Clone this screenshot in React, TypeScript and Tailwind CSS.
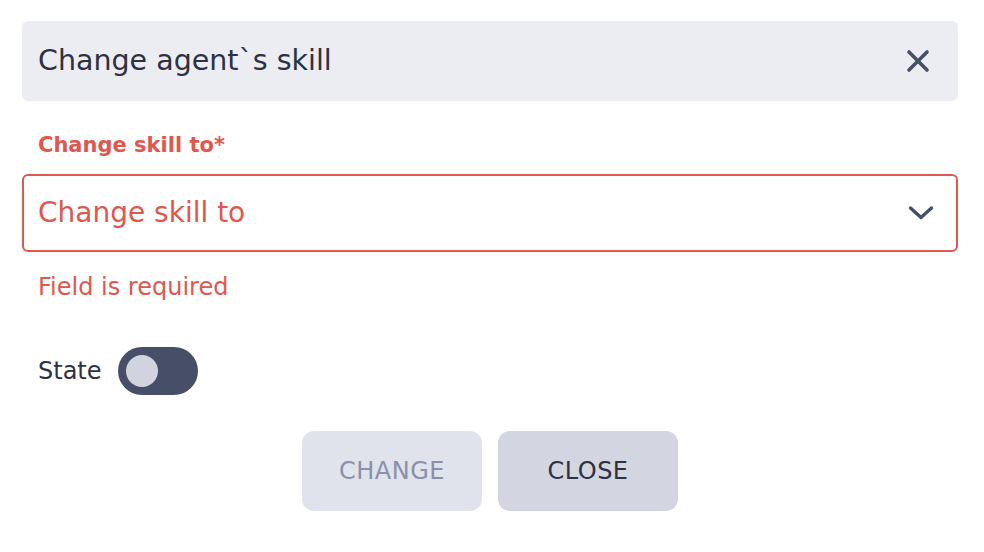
import { useState } from "react";

const FONT = "font-['DejaVu_Sans',sans-serif]";

function CloseIcon() {
  return (
    <svg width="24" height="24" viewBox="0 0 24 24" fill="none">
      <path d="M3 3L21 21M21 3L3 21" stroke="#474F68" strokeWidth="3.6" strokeLinecap="round" />
    </svg>
  );
}

function Chevron() {
  return (
    <svg width="26" height="16" viewBox="0 0 26 16" fill="none">
      <path d="M2.5 3L13 12.5L23.5 3" stroke="#474F68" strokeWidth="3.4" strokeLinecap="round" strokeLinejoin="round" />
    </svg>
  );
}

export default function App() {
  const [on, setOn] = useState(false);

  return (
    <div className={`${FONT} w-[984px] h-[552px] bg-white pl-[22px] pr-[26px] pt-[21px]`}>
      <div className="flex h-[80px] items-center justify-between rounded-md bg-[#ECEDF2] pl-[16px] pr-[28px]">
        <h1 className="text-[28.5px] text-[#2D3142]">Change agent`s skill</h1>
        <button className="flex items-center">
          <CloseIcon />
        </button>
      </div>

      <label className="mt-[30px] block pl-[16px] text-[21px] font-bold leading-[28px] text-[#E0574D]">
        Change skill to*
      </label>

      <div className="mt-[15px] flex h-[78px] items-center justify-between rounded-md border-2 border-[#E0574D] pl-[14px] pr-[22px]">
        <span className="text-[28px] text-[#E0574D]">Change skill to</span>
        <Chevron />
      </div>

      <p className="mt-[21px] pl-[16px] text-[24px] leading-[28px] text-[#E0574D]">Field is required</p>

      <div className="mt-[46px] flex items-center gap-[16px] pl-[16px]">
        <span className="text-[24px] text-[#2D3142]">State</span>
        <button
          onClick={() => setOn(!on)}
          className="flex h-[48px] w-[80px] items-center rounded-full bg-[#474F68] px-[8px]"
        >
          <span className="h-[32px] w-[32px] rounded-full bg-[#D1D4DE]" />
        </button>
      </div>

      <div className="mt-[36px] flex justify-center gap-[16px]">
        <button className="h-[80px] w-[180px] rounded-xl bg-[#E0E3EB] text-[24px] tracking-[0.5px] text-[#8A90A8]">CHANGE</button>
        <button className="h-[80px] w-[180px] rounded-xl bg-[#D3D6E0] text-[24px] tracking-[0.5px] text-[#2D3142]">CLOSE</button>
      </div>
    </div>
  );
}
